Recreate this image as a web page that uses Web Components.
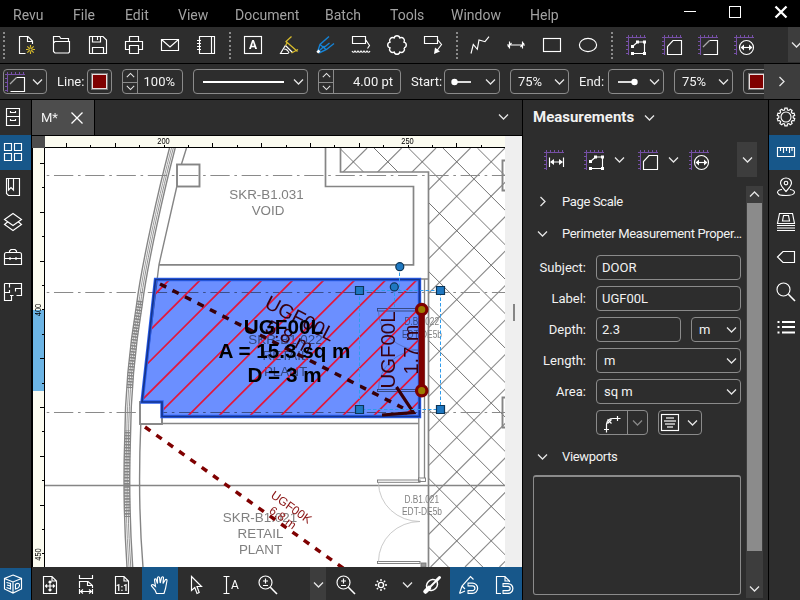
<!DOCTYPE html>
<html lang="en">
<head>
<meta charset="utf-8">
<title>Revu</title>
<style>
  html, body { margin: 0; height: 100%; background: #2d2d2d; overflow: hidden; }
  body { font-family: Roboto, "Liberation Sans", sans-serif; font-size: 14px; color: #f2f2f2; }
</style>
</head>
<body>
<revu-app></revu-app>
<script>
const el = (name, html, setup) => customElements.define(name, class extends HTMLElement {
  connectedCallback() {
    if (this.shadowRoot) return;
    const root = this.attachShadow({ mode: 'open' });
    root.innerHTML = '<style>:host{display:block;box-sizing:border-box;flex:none}*{box-sizing:border-box}</style>' +
      (typeof html === 'function' ? html(this) : html);
    if (setup) setup(this, root);
  }
});

/* ---------- icons, all on a 20 x 20 grid ---------- */
const P = '#7650a6';
let ticks = '';
for (let i = 0; i < 4; i++) ticks += `M${6.5 + i * 4} 2V0M2 ${6.5 + i * 4}H0`;
const scale = `<path stroke="${P}" stroke-width="1" d="M2.5 20V2.5H20M2.5 2.5V0M2.5 2.5H0 ${ticks}"/>`;
const W = 'fill="#fff" stroke="none"';
const txt = (x, y, s, t) => `<text x="${x}" y="${y}" font-size="${s}" font-weight="700" text-anchor="middle" ${W}>${t}</text>`;
let scallop = 'M';
for (let i = 0; i <= 8; i++) {
  const a = (i + .5) * Math.PI / 4, x = 10 + 7.6 * Math.cos(a), y = 10 + 7.6 * Math.sin(a);
  scallop += (i ? 'A3 3 0 0 1 ' : '') + x.toFixed(2) + ' ' + y.toFixed(2);
}
let gear = 'M';
for (let i = 0; i < 10; i++) {
  [[-.2, 7.2], [-.13, 8.9], [.13, 8.9], [.2, 7.2]].forEach(([d, r], k) => {
    const a = i * Math.PI / 5 + d - Math.PI / 2;
    gear += (i || k ? 'L' : '') + (10 + r * Math.cos(a)).toFixed(2) + ' ' + (10 + r * Math.sin(a)).toFixed(2);
  });
}
gear += 'z';
const magn = `<circle cx="7.5" cy="7.5" r="6.5"/><path d="M12.3 12.3L19 19" stroke-width="1.6"/>`;
const plusMinus = '<path d="M7.5 3.5V8.5M5 6H10M5 10.5H10"/>';
const page = 'M3.5 1.5H12L16.5 6V18.500H3.5zM12 1.5V6H16.5';
const ICONS = {
  new: `<path d="M9.5 18.5H3.5V1.5H12L16.5 6V9M11.5 1.5V6.5H16.5"/><g stroke="#d8bc2c"><circle cx="14.5" cy="14.5" r="1.7"/><path d="M14.5 10v2M14.5 17v2M10 14.5h2M17 14.5h2M11.3 11.3l1.5 1.5M16.2 16.2l1.5 1.5M17.7 11.3l-1.5 1.5M12.8 16.2l-1.5 1.5"/></g>`,
  open: `<path d="M1.5 16.5V1.5H7.5L8.8 3.5H16.5V6.5H17.5V17L16.5 18H3L1.5 16.5V8L3 6.5H17"/>`,
  save: `<path d="M1.5 1.5H15L18.5 5V18.5H1.5zM4.5 1.5V7H12.5V1.5M9.5 2V5M4.5 18.5V12.5H15.5V18.5"/>`,
  print: `<path d="M5.5 6.5V1.5H14.5V6.5M5.5 14.5H1.5V6.5H18.5V14.5H14.5M5.5 10.5H14.5V18.5H5.5z"/>`,
  mail: `<path d="M1.5 4.5H18.5V15.5H1.5zM1.5 4.5L10 12 18.5 4.5"/>`,
  book: `<path d="M3.5 1.5H18.5V18.5H3.5zM15.5 1.5V18.5M1 5.5H5M1 8.5H5M1 11.5H5M1 14.5H5"/>`,
  textbox: `<rect x="1.5" y="1.5" width="17" height="17"/>${txt(10, 14.3, 12, 'A')}`,
  highlight: `<path d="M6.300 10.500L1.500 18.500H9.500M5 14Q8.500 14 10 18M6.500 10.500L13.500 17.500"/><path stroke="#d8bc2c" stroke-width="1.300" d="M12.500 1.500L7 6.500L8 8L6.500 10.500M7 6.500L18.500 16.500M12.500 18L19 14.500"/>`,
  pen: `<path stroke="#1583d6" stroke-width="1.400" d="M14 1.500L5 9.500L2.500 17M19 8.500L11.500 14.500L4 18M5 9.500L11 14.500M4.500 15.500L9.500 11M9 12.500L14.500 8"/><path d="M2.300 17.700L4.500 15.500" stroke-width="2.600"/>`,
  callcloud: `<path d="M1.5 1.5H14.5V8.5H1.5zM14.5 4.5L18.5 10.5L16.5 13.5M1 16q1.500 2.500 3 0q1.500 2.500 3 0q1.500 2.500 3 0q1.500 2.500 3 0q1.500 2.500 3 0q1.500 2.500 3 0"/>`,
  cloud: `<path d="${scallop}" stroke-width="1.4"/>`,
  callout: `<path d="M1.5 1.5H14.5V8.5H1.500zM14.5 4.500L18.500 9.500L14 15.500"/><path ${W} d="M11 19L12 12.500L17 16.500z"/>`,
  poly: `<path d="M1 18.500L3.300 9.500L7.300 14.300L9 5L15 6.700L19 1.700"/>`,
  dim: `<path d="M1 10H19M3.500 6.500V13.500M16.500 6.500V13.500M2 12L5.500 8M14.500 12L18 8"/>`,
  rect: `<rect x="1.500" y="3.500" width="17" height="13"/>`,
  oval: `<ellipse cx="10" cy="10" rx="8.600" ry="6.600"/>`,
  mpoly: `${scale}<path d="M6.500 11.500L11.500 7H18.500V18.500H6.500"/><path ${W} d="M5 10h3v3h-3zM10 5.500h3v3h-3zM17 5.500h3v3h-3zM17 17h3v3h-3zM5 17h3v3h-3z"/>`,
  marea: `${scale}<path d="M5.500 19.500V11.500L11 5.500H19.500V19.500z"/>`,
  mperim: `${scale}<path d="M11.500 5.500H19.500V19.500H5.500"/><path stroke="#aaa" d="M5 12L11.500 5.500"/>`,
  mcirc: `${scale}<circle cx="12.500" cy="12.500" r="7"/><path d="M8 12.500H17"/><path ${W} d="M6.500 12.500l3.500-3v6zM18.500 12.500l-3.500-3v6z"/>`,
  mlen: `${scale}<path d="M5.500 7.500V17M19.500 7.500V17M7 12H18"/><path ${W} d="M6 12l4-3v6zM19 12l-4-3v6z"/>`,
  cabinet: `<path d="M3.500 1.500H16.500V18.500H3.500zM3.500 9.500H16.500M7.500 4V5.500H12.500V4M7.500 12V13.500H12.500V12"/>`,
  grid: `<path d="M1.500 1.500h7v7h-7zM11.500 1.500h7v7h-7zM1.500 11.500h7v7h-7zM11.500 11.500h7v7h-7z"/>`,
  bookmark: `<path d="M3.500 1.500H16.500V18.500H5.500L3.500 16.500zM5.500 1.500V13L8 10.500L10.500 13V1.500"/>`,
  layers: `<path d="M10 1.500L18.500 7.500L10 13.500L1.500 7.500zM4.500 10L1.500 12.500L10 18.500L18.500 12.500L15.500 10"/>`,
  toolbox: `<path d="M1.500 7.500Q1.500 5.500 3.500 5.500H16.500Q18.500 5.500 18.500 7.500V17.500H1.500zM6.500 5.500V4L8 2.500H12L13.500 4V5.500M1.500 11.500H18.500M7 10V13M13 10V13"/>`,
  plan: `<path d="M6.500 1.500H18.500V13.500H13.500M1.500 1.500H6.500V5.500M6.500 8V10.500H1.500M1.500 1.500V18.500H8.500V13.500M10.500 13.500H7M18.500 6.500H12.500V9.500"/>`,
  gear: `<path d="${gear}"/><circle cx="10" cy="10" r="5"/>`,
  ruler: `<path d="M1.500 5.500H18.500V14.500H1.500zM4.500 5.500V9M7.500 5.500V11M10.500 5.500V9M13.500 5.500V11M16 5.500V9"/>`,
  pin: `<path d="M10 14.500Q4.500 8.500 4.500 6A5.500 5 0 0 1 15.500 6Q15.500 8.500 10 14.500zM6 12.500Q1.500 13 1.500 15.500Q2 18.500 10 18.500Q18 18.500 18.500 15.500Q18.500 13 14 12.500"/><circle cx="10" cy="6" r="1.800"/>`,
  stack: `<path d="M3.500 1.500H16.500L18.500 11.500H1.500zM6.500 9L7.500 3.500H12.500L13.500 9zM1 13.500H19M1 16H19M1 18.500H19"/>`,
  tag: `<path d="M1.500 10L7 4.500H18.500V15.500H7z"/>`,
  search: magn,
  list: `<path stroke-width="1.800" d="M6 5H19M6 10H19M6 15.500H19M1.500 5H3.500M1.500 10H3.500M1.500 15.500H3.500"/>`,
  cube: `<path d="M10 1L18.500 4.500V15L10 19L1.500 15V4.500zM1.500 4.500L10 8L18.500 4.500M10 8V19"/><path d="M3.500 8.500L7.500 9.500V15L3.500 13.500M4 11L7.500 12M12.500 10V15Q16.500 14 16.500 11Q16.500 8.500 12.500 10"/>`,
  fitpage: `<path d="${page}M10 6V16M5.500 11H14.500M8.500 7.500L10 6L11.500 7.500M8.500 14.500L10 16L11.500 14.500M7 9.500L5.500 11L7 12.500M13 9.500L14.500 11L13 12.500"/>`,
  fitwidth: `<path d="M3.500 0V3.500H16.500V0M3.500 13V6.500H12L16.500 10.500V13M11.500 6.500V10.500H16.500M4.500 16.500H15.500M3.500 14V19M16.500 14V19M7 14.500L4.500 16.500L7 18.500M13 14.500L15.500 16.500L13 18.500"/>`,
  actual: `<path d="${page}"/>${txt(10, 16, 8.5, '1:1')}`,
  hand: `<path d="M6.500 18.500L5 15L1.500 11Q1 9.500 3 9.500L5.500 11.500L4.500 5Q4.500 3.500 6 4L7.500 8.500L7.500 2.500Q8.500 1 9.500 2.500L10.200 8L11.500 2.500Q12.700 1 13.500 2.500L13 8.500L15.500 4.500Q17 4 17 5.500L15.500 13.500L14 18.500z"/>`,
  arrow: `<path d="M5.500 1.500V15.500L8.800 12.500L11 18.500L13.200 17.500L11 11.500H15.500z"/>`,
  seltext: `<path d="M2.500 1.500H8.500M2.500 18.500H8.500M5.500 1.500V18.500"/><text x="14" y="14" font-size="12" text-anchor="middle" ${W}>A</text>`,
  zoom: magn + plusMinus,
  sun: `<circle cx="10" cy="10" r="2.600" stroke-width="1.400"/><path stroke-width="1.400" d="M10 4V6M10 14V16M4 10H6M14 10H16M5.800 5.800l1.300 1.300M12.900 12.900l1.300 1.300M14.200 5.800l-1.300 1.300M7.100 12.900l-1.300 1.300"/>`,
  plug: `<ellipse cx="10" cy="10" rx="6" ry="5" transform="rotate(-45 10 10)" stroke-width="1.500"/><path d="M3.500 16.500L7 13" stroke-width="4.500" stroke-linecap="round"/><path d="M14.500 5.500L17.500 2.500" stroke-width="3" stroke-linecap="round"/><path d="M5 15L16 4" stroke-width="2"/>`,
  snapmark: `<path d="M1.500 18.500L4 11L12.500 1.500L15.500 4.500M4 11L7 14M1.500 18.500L7 16" /><path stroke-width="4" d="M9.500 9.500H14.500A3.500 3.500 0 0 1 14.500 17H9.500"/><path stroke="#17578a" stroke-width="1.500" d="M10.500 9.500H14.500A3.500 3.500 0 0 1 14.500 17H10.500"/>`,
  snappage: `<path d="M7 18.500H2.500V1.500H11L15.500 6V7M11 1.500V6H15.500"/><path stroke-width="4" d="M8.500 10H14A3.300 3.300 0 0 1 14 17H8.500"/><path stroke="#17578a" stroke-width="1.500" d="M9.500 10H14A3.300 3.300 0 0 1 14 17H9.500"/>`,
  curve: `<path stroke-width="1.200" d="M4.500 19.500V11Q5.500 5.500 11 5.500H18.500M2 16.500H7M15.500 3V8M5.500 6.500L9.500 10.500M9.500 6.500L5.500 10.500"/>`,
  align: `<rect x="1.500" y="1.500" width="17" height="16"/><path stroke="#aaa" stroke-width="2" d="M6 5H14M4 8H16M5 11H15M7 14H13"/>`
};
el('ui-icon', h => `<style>:host{width:20px;height:20px}svg{display:block;overflow:visible;font-family:Roboto,sans-serif}</style>
<svg width="20" height="20" viewBox="0 0 20 20" fill="none" stroke="#fff" stroke-width="1.150">${ICONS[h.getAttribute('name')] || ''}</svg>`);

const CH = { down: 'M1 3.500L5.500 8L10 3.500', up: 'M1 7.500L5.500 3L10 7.500', right: 'M3.500 1L8 5.500L3.500 10' };
el('ui-chevron', h => {
  const s = h.getAttribute('size') || 11;
  return `<style>:host{width:${s}px;height:${s}px}svg{display:block}</style>
<svg width="${s}" height="${s}" viewBox="0 0 11 11" fill="none" stroke="${h.getAttribute('tone') || '#e6e6e6'}" stroke-width="1.300"><path d="${CH[h.getAttribute('dir') || 'down']}"/></svg>`;
});

/* ---------- framed controls ---------- */
const frame = 'height:25px;border:1px solid #8b8b8b;border-radius:4px;display:flex;align-items:center;';
el('ui-box', h => `<style>:host{${frame}width:${h.getAttribute('w')}px}</style><slot></slot>`);
el('ui-combo', h => `<style>:host{${frame}width:${h.getAttribute('w')}px;padding:0 4px 0 ${h.getAttribute('pad') || 7}px;justify-content:space-between}
ui-chevron{margin-right:-1px}</style><slot></slot><ui-chevron></ui-chevron>`);
el('ui-spin', h => `<style>:host{${frame}width:${h.getAttribute('w')}px}
.s{width:15px;height:23px;border-right:1px solid #8b8b8b;display:grid;grid-template-rows:1fr 1fr}
.s div{width:14px;display:grid;place-items:center}.s div+div{border-top:1px solid #8b8b8b}
.v{flex:1;text-align:right;padding-right:7px}</style>
<div class="s"><div><ui-chevron size="9" dir="up"></ui-chevron></div><div><ui-chevron size="9"></ui-chevron></div></div><div class="v"><slot></slot></div>`);
el('ui-swatch', `<style>:host{width:15px;height:15px;background:#7f0000;border:1px solid #e8dcdc;outline:1px solid #777}</style>`);

/* ---------- menu bar ---------- */
el('menu-bar', `<style>:host{height:27px;background:#000;color:#a2a2a2;display:flex}
nav{display:grid;grid-template-columns:60px 52px 53px 57px 90px 65px 61px 79px 60px;padding-left:13px;line-height:30px;width:673px}
svg{display:block}</style>
<nav><span>Revu</span><span>File</span><span>Edit</span><span>View</span><span>Document</span><span>Batch</span><span>Tools</span><span>Window</span><span>Help</span></nav>
<svg width="127" height="27" fill="none" stroke="#fff"><path d="M11 11.500H23" /><rect x="56.500" y="6.500" width="11" height="11"/><path stroke-width="2.300" d="M102.500 6.500L113.500 17.500M113.500 6.500L102.500 17.500"/></svg>`);

/* ---------- first toolbar ---------- */
el('tool-grip', h => `<style>:host{width:${h.getAttribute('w')}px;height:36px;display:grid;place-items:center}
i{width:2px;height:27px;background:repeating-linear-gradient(#8a8a8a 0 2px,transparent 2px 4.170px)}</style><i></i>`);
el('tool-cells', h => `<style>:host{display:flex}span{width:36px;height:36px;display:grid;place-items:center}</style>` +
  h.getAttribute('icons').split(' ').map(n => `<span><ui-icon name="${n}"></ui-icon></span>`).join(''));
el('main-toolbar', `<style>:host{height:37px;background:#2d2d2d;border-bottom:1px solid #000;display:flex}
.m{margin-left:26px;width:12px;height:35px;background:#3d3d3d;overflow:hidden;display:flex;align-items:center;padding-left:3px}</style>
<tool-grip w="7"></tool-grip><div style="width:1px"></div><tool-cells icons="new open save print mail book"></tool-cells>
<tool-grip w="11"></tool-grip><tool-cells icons="textbox highlight pen callcloud cloud callout"></tool-cells>
<tool-grip w="11"></tool-grip><tool-cells icons="poly dim rect oval"></tool-cells>
<tool-grip w="12"></tool-grip><tool-cells icons="mpoly marea mperim mcirc"></tool-cells>
<div class="m"><ui-chevron></ui-chevron></div>`);

/* ---------- property toolbar ---------- */
el('line-end', h => `<style>svg{display:block}:host([flip]) svg{transform:scaleX(-1)}</style>
<svg width="21" height="8"><path d="M3 4H20" stroke="#ddd" stroke-width="2"/><circle cx="3.500" cy="4" r="3.200" fill="#fff"/></svg>`);
el('property-toolbar', `<style>:host{height:36px;background:#2d2d2d;border-bottom:1px solid #000;display:flex;align-items:center;padding-left:3px;overflow:hidden;font-size:13px}
.l{width:var(--w);padding-left:10px;white-space:nowrap}.g{width:10px;flex:none}
.more{width:36px;height:35px;background:#3d3d3d;display:grid;place-items:center;padding-right:2px}
.clip{width:21px;overflow:hidden}hr{width:81px;height:2px;border:0;margin:0;background:#fff}</style>
<ui-combo w="44" pad="1"><ui-icon name="mperim"></ui-icon></ui-combo>
<span class="l" style="--w:40px">Line:</span><ui-box w="25"><ui-swatch style="margin-left:4px"></ui-swatch></ui-box>
<div class="g"></div><ui-spin w="61">100%</ui-spin><div class="g"></div>
<ui-combo w="115" pad="9"><hr></ui-combo><div class="g"></div><ui-spin w="83">4.00 pt</ui-spin>
<span class="l" style="--w:43px">Start:</span><ui-combo w="56" pad="6"><line-end></line-end></ui-combo><div class="g"></div>
<ui-combo w="59">75%</ui-combo><span class="l" style="--w:39px">End:</span>
<ui-combo w="56" pad="8"><line-end flip></line-end></ui-combo><div class="g"></div><ui-combo w="59">75%</ui-combo>
<div class="g"></div><div class="clip"><ui-box w="26"><ui-swatch style="margin-left:5px"></ui-swatch></ui-box></div>
<div class="more"><ui-chevron dir="right"></ui-chevron></div>`);

/* ---------- side rails ---------- */
el('side-rail', h => `<style>:host{background:#2d2d2d;display:flex;flex-direction:column;width:${h.getAttribute('w')}px}
div{height:35px;padding:0 0 1px ${h.getAttribute('pad')}px;display:flex;align-items:center}
.on,.foot{background:#17578a}.foot{margin-top:auto;height:32px;padding-bottom:0}</style>` +
  h.getAttribute('icons').split(' ').map((n, i) => `<div${i == 1 ? ' class="on"' : ''}><ui-icon name="${n}"></ui-icon></div>`).join('') +
  (h.hasAttribute('foot') ? '<div class="foot"><ui-icon name="cube"></ui-icon></div>' : ''));

/* ---------- document ---------- */
el('doc-tabs', `<style>:host{height:36px;background:#2d2d2d;border-bottom:1px solid #000;display:flex;align-items:center}
.t{width:63px;height:35px;background:#4d4d4d;border-right:1px solid #000;display:flex;align-items:center;padding-left:9px;gap:14px;font-size:13px}
svg{display:block}ui-chevron{margin:0 13px 2px auto}</style>
<div class="t"><span style="width:16px">M*</span><svg width="12" height="12" stroke="#fff" stroke-width="1.300"><path d="M.5 .5L11.500 11.500M11.500 .5L.5 11.500"/></svg></div><ui-chevron></ui-chevron>`);

el('ruler-x', () => {
  let d = '';
  for (let i = 0; i < 18; i++) {
    const x = Math.round(66 + i * 24.4 - 45) + .5, tall = i % 2 == 0 && i != 4 && i != 14;
    d += `M${x} 12V${tall ? 7 : 9}`;
  }
  return `<style>:host{width:460px;height:12px}svg{display:block;background:#fbfbf0;font:9px Liberation Sans,sans-serif}</style>
<svg width="460" height="12"><path d="${d}" stroke="#000"/><path d="M0 11.500H460" stroke="#000"/>
<text x="118.500" y="7.500" text-anchor="middle" textLength="12.500" lengthAdjust="spacingAndGlyphs">200</text><text x="362.500" y="7.500" text-anchor="middle" textLength="12.500" lengthAdjust="spacingAndGlyphs">250</text></svg>`;
});
el('ruler-y', () => {
  let d = '';
  for (let i = 0; i < 17; i++) {
    const y = Math.round(163 + i * 24.4 - 148) + .5;
    d += `M12 ${y}H${i % 2 == 0 && i != 6 && i != 16 ? 7 : 9}`;
  }
  return `<style>:host{width:12px;height:419px}svg{display:block;background:#fbfbf0;font:9px Liberation Sans,sans-serif}</style>
<svg width="12" height="419"><rect y="162" width="11" height="81" fill="#6cb4e4"/><path d="${d}M11.500 0V419" stroke="#000"/>
<text transform="translate(8 162) rotate(-90)" text-anchor="middle" textLength="12.500" lengthAdjust="spacingAndGlyphs">400</text>
<text transform="translate(8 406.500) rotate(-90)" text-anchor="middle" textLength="12.500" lengthAdjust="spacingAndGlyphs">450</text></svg>`;
});

/* The drawing uses window coordinates, so its view box starts at 45,148. */
el('plan-canvas', () => {
  const room = 'M155.500 279.500H419.500V416.500H162V402H142z';
  const facade = o => `M${169.500 + o} 148C${159 + o} 188 ${142 + o} 262 ${136.500 + o} 305C${129 + o} 350 ${125 + o} 395 ${124.700 + o} 440C${123 + o} 490 ${124.500 + o} 530 ${127 + o} 567`;
  let red = '';
  for (let s = 418.300; s < 860; s += 30.930) red += `M${(s - 270).toFixed(1)} 270L${(s - 420).toFixed(1)} 420`;
  let hatch = '', dots = '';
  for (let k = -30; k < 30; k++) {
    const a = 456.700 + k * 34.460;
    hatch += `M${(a + 13.800).toFixed(1)} 148L${(a - 405.200).toFixed(1)} 567`;
    dots += `M${(a - 13.800).toFixed(1)} 148L${(a + 405.200).toFixed(1)} 567`;
  }
  const dd = [175.500, 292.500, 412.500].map(y => `M22.700 ${y}H505`).join('');
  return `<style>:host{width:460px;height:419px}svg{display:block;background:#fff;font-family:"Liberation Sans",Arial,sans-serif}
.g{fill:#808080;font-size:13.400px}.s{fill:#808080;font-size:10px}.b{font-size:20.700px;font-weight:700}.m{text-anchor:middle}</style>
<svg width="460" height="419" viewBox="45 148 460 419" fill="none">
<defs>
<clipPath id="h"><path d="M340 148H505V567H428.500V172H340z"/></clipPath>
<clipPath id="c"><path d="M157 281H418V415H163.500V400.500H143.500z"/></clipPath>
<clipPath id="l"><path d="M100 300H200V388H100zM100 430H200V517H100z"/></clipPath>
</defs>
<g clip-path="url(#h)"><path d="${hatch}" stroke="#8c8c8c" stroke-width="1.150"/><path d="${dots}" stroke="#666" stroke-width=".9"/></g>
<path d="${dd}" stroke="#8a8a8a" stroke-width="1.200" stroke-dasharray="19.300 4.700 2.600 4.680"/>
<g stroke="#858585" stroke-width="1.400">
<path d="${facade(0)}"/><path d="${facade(2)}" stroke-width=".8"/><path d="${facade(3.800)}" stroke-width=".9"/><path d="${facade(5.700)}"/>
<path d="${facade(3)}" clip-path="url(#l)" stroke-width="6" stroke-dasharray="1.600 1.400"/>
<path d="M186.500 148L181.500 164M176.700 187L159 264.500L142 402M140.800 424Q137.500 500 143 567"/>
</g>
<g stroke="#858585" stroke-width="1.900">
<rect x="177" y="164.500" width="22.500" height="22"/><rect x="140" y="402" width="22" height="22" fill="#fff"/>
<path d="M325.500 148V186.500H413.500V264.800H159M340.500 148V172H428.500V567" stroke-width="1.700"/>
<path d="M162 423.500H418.500" stroke-width="1.700"/><path d="M418.800 417V478M424.500 279V478M428.500 279H419" stroke-width="1.300"/>
<path d="M45 485.500H505" stroke-width="1.700"/><path d="M505 160.500H502.500V190.500H505M505 397.500H502.500V427.500H505"/>
</g>
<g stroke="#777" stroke-width=".9"><rect x="377.500" y="308.500" width="42" height="2.500"/><rect x="377.500" y="389.500" width="42" height="2"/>
<rect x="377.500" y="480" width="42.500" height="2.300"/><rect x="377.500" y="561.500" width="42.500" height="2"/>
<rect x="418.500" y="478" width="7" height="3.500"/><rect x="421" y="563" width="5" height="4" fill="#999"/></g>
<g stroke="#bdbdbd" stroke-width=".8"><path d="M378.500 483A41.500 39 0 0 0 420 521.500A41.500 40 0 0 0 378.500 561.500M378.500 311A41.500 39 0 0 0 420 350A41.500 39 0 0 0 378.500 389"/></g>
<g class="g m"><text x="266.500" y="199.300">SKR-B1.031</text><text x="268" y="215.200">VOID</text>
<text x="285.500" y="344">SKR-B1.022</text><text x="285.500" y="360">RETAIL</text><text x="285.500" y="376">PLANT</text>
<text x="260" y="522.300">SKR-B1.021</text><text x="260.500" y="538.300">RETAIL</text><text x="260.500" y="554.300">PLANT</text></g>
<g class="s"><text x="404.500" y="325.300" textLength="34.500" lengthAdjust="spacingAndGlyphs">D.B1.022</text><text x="402" y="337.500" textLength="40" lengthAdjust="spacingAndGlyphs">EDT-DE5b</text>
<text x="404.500" y="502.800" textLength="34.500" lengthAdjust="spacingAndGlyphs">D.B1.021</text><text x="402" y="514.800" textLength="40" lengthAdjust="spacingAndGlyphs">EDT-DE5b</text></g>
<g style="mix-blend-mode:multiply"><path d="${room}" fill="#6b8fff"/></g>
<path d="${red}" clip-path="url(#c)" stroke="#e4173a" stroke-width="1.700"/>
<path d="${room}" stroke="#2a5ff0" stroke-width="3.400"/><path d="${room}" stroke="#16358c" stroke-width="1.700"/>
<g stroke="#380008" stroke-width="3.500"><path d="M160 284L403 408" stroke-dasharray="7 7.020"/><path d="M396.500 387L413.500 412.500L382 415" stroke-width="3.200"/></g>
<g fill="#380010" font-size="20"><text transform="translate(263.500 307) rotate(27.500)">UGF00L</text><text class="m" transform="translate(286 343) rotate(27.500)">5.8 m</text>
<text transform="translate(394.500 388.500) rotate(-90)" textLength="77" lengthAdjust="spacingAndGlyphs">UGF00L</text><text transform="translate(418 374.500) rotate(-90)">1.7 m</text></g>
<g class="b m" fill="#000"><text x="283.500" y="334">UGF00L</text><text x="284.500" y="358">A = 15.3 sq m</text><text x="284.500" y="381.700">D = 3 m</text></g>
<path d="M145 427L345 569.500" stroke="#7f0000" stroke-width="3.500" stroke-dasharray="6.600 7.330"/>
<g fill="#8a1414" font-size="12" class="m"><text transform="translate(289 510.500) rotate(35.400)">UGF00K</text><text transform="translate(280.500 521) rotate(35.400)">6.8 m</text></g>
<path d="M421.700 309V391" stroke="#7f0000" stroke-width="6"/>
<g stroke="#7f0000" stroke-width="3.200" fill="#9c7c00"><circle cx="421.700" cy="309.500" r="5.200"/><circle cx="421.700" cy="390.700" r="5.200"/></g>
<path d="M359.500 290.500H440.500V409.500H359.500zM399.500 267V290M394.500 287V309" stroke="#2f9cec" stroke-dasharray="3.500 2"/>
<g fill="#1f78c1" stroke="#0c3557" stroke-width="1.200"><path d="M355.500 286.500h8v8h-8zM436.500 286.500h8v8h-8zM355.500 405.500h8v8h-8zM436.500 405.500h8v8h-8z"/>
<circle cx="399.800" cy="266.700" r="4"/><circle cx="394.300" cy="286.900" r="4"/></g>
</svg>`;
});

el('doc-view', `<style>:host{height:431px;display:grid;grid-template-columns:13px 460px 17px;grid-template-rows:12px 419px;background:#000}
.c{background:#4d4d4d}ruler-y{justify-self:end}.v{grid-column:3;grid-row:1/3;background:#efefef;display:flex;padding:168px 0 0 8px}
.v i{width:2px;height:17px;background:#858585}ruler-x{grid-area:1/2}ruler-y{grid-area:2/1}plan-canvas{grid-area:2/2}</style>
<div class="c"></div><ruler-x></ruler-x><ruler-y></ruler-y><plan-canvas></plan-canvas><div class="v"><i></i></div>`);

el('view-bar', `<style>:host{height:33px;background:#2d2d2d;display:grid;grid-template-columns:36px 36px 38px 36px 36px 35px 61px 16px 38px 34px 18px 32px 2px 36px 36px}
div{display:grid;align-items:center;justify-items:center;padding-top:2px}.on{background:#17578a}.hi{background:#3d3d3d}.st{justify-items:start;padding-left:9px}</style>
<div><ui-icon name="fitpage"></ui-icon></div><div><ui-icon name="fitwidth"></ui-icon></div><div style="padding-right:2px"><ui-icon name="actual"></ui-icon></div>
<div class="on"><ui-icon name="hand"></ui-icon></div><div><ui-icon name="arrow"></ui-icon></div><div style="padding-right:1px"><ui-icon name="seltext"></ui-icon></div>
<div class="st"><ui-icon name="zoom"></ui-icon></div><div class="hi"><ui-chevron></ui-chevron></div><div style="padding-left:2px"><ui-icon name="zoom"></ui-icon></div>
<div><ui-icon name="sun"></ui-icon></div><div><ui-chevron></ui-chevron></div><div><ui-icon name="plug"></ui-icon></div><div></div>
<div class="on"><ui-icon name="snapmark"></ui-icon></div><div class="on"><ui-icon name="snappage"></ui-icon></div>`);

/* ---------- measurements panel ---------- */
el('section-title', h => `<style>:host{height:32px;display:flex;align-items:center;padding-left:14px;gap:14px;font-size:13px;letter-spacing:-.34px}
span{white-space:nowrap}</style><ui-chevron dir="${h.getAttribute('dir') || 'down'}"></ui-chevron><span><slot></slot></span>`);
el('form-row', h => `<style>:host{display:grid;grid-template-columns:63px 1fr;column-gap:10px;align-items:center;height:25px;margin-bottom:6px}
b{font-weight:400;text-align:right}.f{display:flex;gap:10px}</style><b>${h.getAttribute('label') || ''}</b><div class="f"><slot></slot></div>`);
el('measure-panel', `<style>:host{width:246px;background:#2d2d2d;border-right:1px solid #000;font-size:13px}
h2{margin:0;height:35px;font-size:15px;line-height:35px;padding-left:10px;display:flex;align-items:center;gap:10px}
.tools{height:35px;margin-top:7px;display:grid;grid-template-columns:40px 54px 51px 49px 20px;padding-left:21px;align-items:center}
.p{display:flex;align-items:center;gap:10px}.hi{width:20px;margin-left:-1px;height:35px;background:#3d3d3d;display:grid;place-items:center}
.scroll{height:412px;margin-top:9px;display:grid;grid-template-columns:223px 17px}
.bar{background:#3d3d3d;display:grid;grid-template-rows:17px 348px 1fr;justify-items:center}.bar>*{align-self:center}
.bar i{width:15px;height:348px;background:#8b8b8b}.bar>:last-child{margin-top:28px}
ui-box span{padding-left:5px}.list{width:208px;height:120px;margin:3px 0 0 10px;border:1px solid #8b8b8b;border-top-width:2px;border-radius:3px}
.cv{width:31px;height:23px;border-right:1px solid #8b8b8b;display:grid;place-items:center}.cd{flex:1;display:grid;place-items:center}</style>
<h2>Measurements<ui-chevron></ui-chevron></h2>
<div class="tools"><ui-icon name="mlen"></ui-icon><div class="p"><ui-icon name="mpoly"></ui-icon><ui-chevron></ui-chevron></div>
<div class="p"><ui-icon name="marea"></ui-icon><ui-chevron></ui-chevron></div><ui-icon name="mcirc"></ui-icon><div class="hi"><ui-chevron></ui-chevron></div></div>
<div class="scroll"><div style="margin-top:-1px">
<section-title dir="right">Page Scale</section-title><section-title>Perimeter Measurement Proper…</section-title>
<div style="height:6px"></div>
<form-row label="Subject:"><ui-box w="145"><span>DOOR</span></ui-box></form-row>
<form-row label="Label:"><ui-box w="145"><span>UGF00L</span></ui-box></form-row>
<form-row label="Depth:"><ui-box w="85"><span>2.3</span></ui-box><ui-combo w="50">m</ui-combo></form-row>
<form-row label="Length:"><ui-combo w="145">m</ui-combo></form-row>
<form-row label="Area:"><ui-combo w="145">sq m</ui-combo></form-row>
<form-row><ui-box w="52"><div class="cv"><ui-icon name="curve"></ui-icon></div><div class="cd"><ui-chevron tone="#888"></ui-chevron></div></ui-box>
<ui-combo w="44" pad="1"><ui-icon name="align"></ui-icon></ui-combo></form-row>
<section-title style="margin-top:-1px">Viewports</section-title><div class="list"></div>
</div><div class="bar"><ui-chevron dir="up"></ui-chevron><i></i><ui-chevron></ui-chevron></div></div>`);

el('revu-app', `<style>:host{width:800px;height:600px;display:flex;flex-direction:column;background:#000;overflow:hidden}
main{display:flex;height:500px}.doc{width:490px;margin:0 1px 0 1px;display:flex;flex-direction:column;flex:none}</style>
<menu-bar></menu-bar><main-toolbar></main-toolbar><property-toolbar></property-toolbar>
<main><side-rail w="31" pad="3" foot icons="cabinet grid bookmark layers toolbox plan"></side-rail>
<div class="doc"><doc-tabs></doc-tabs><doc-view></doc-view><view-bar></view-bar></div>
<measure-panel></measure-panel>
<side-rail w="31" pad="7" icons="gear ruler pin stack tag search list"></side-rail></main>`);
</script>
</body>
</html>
